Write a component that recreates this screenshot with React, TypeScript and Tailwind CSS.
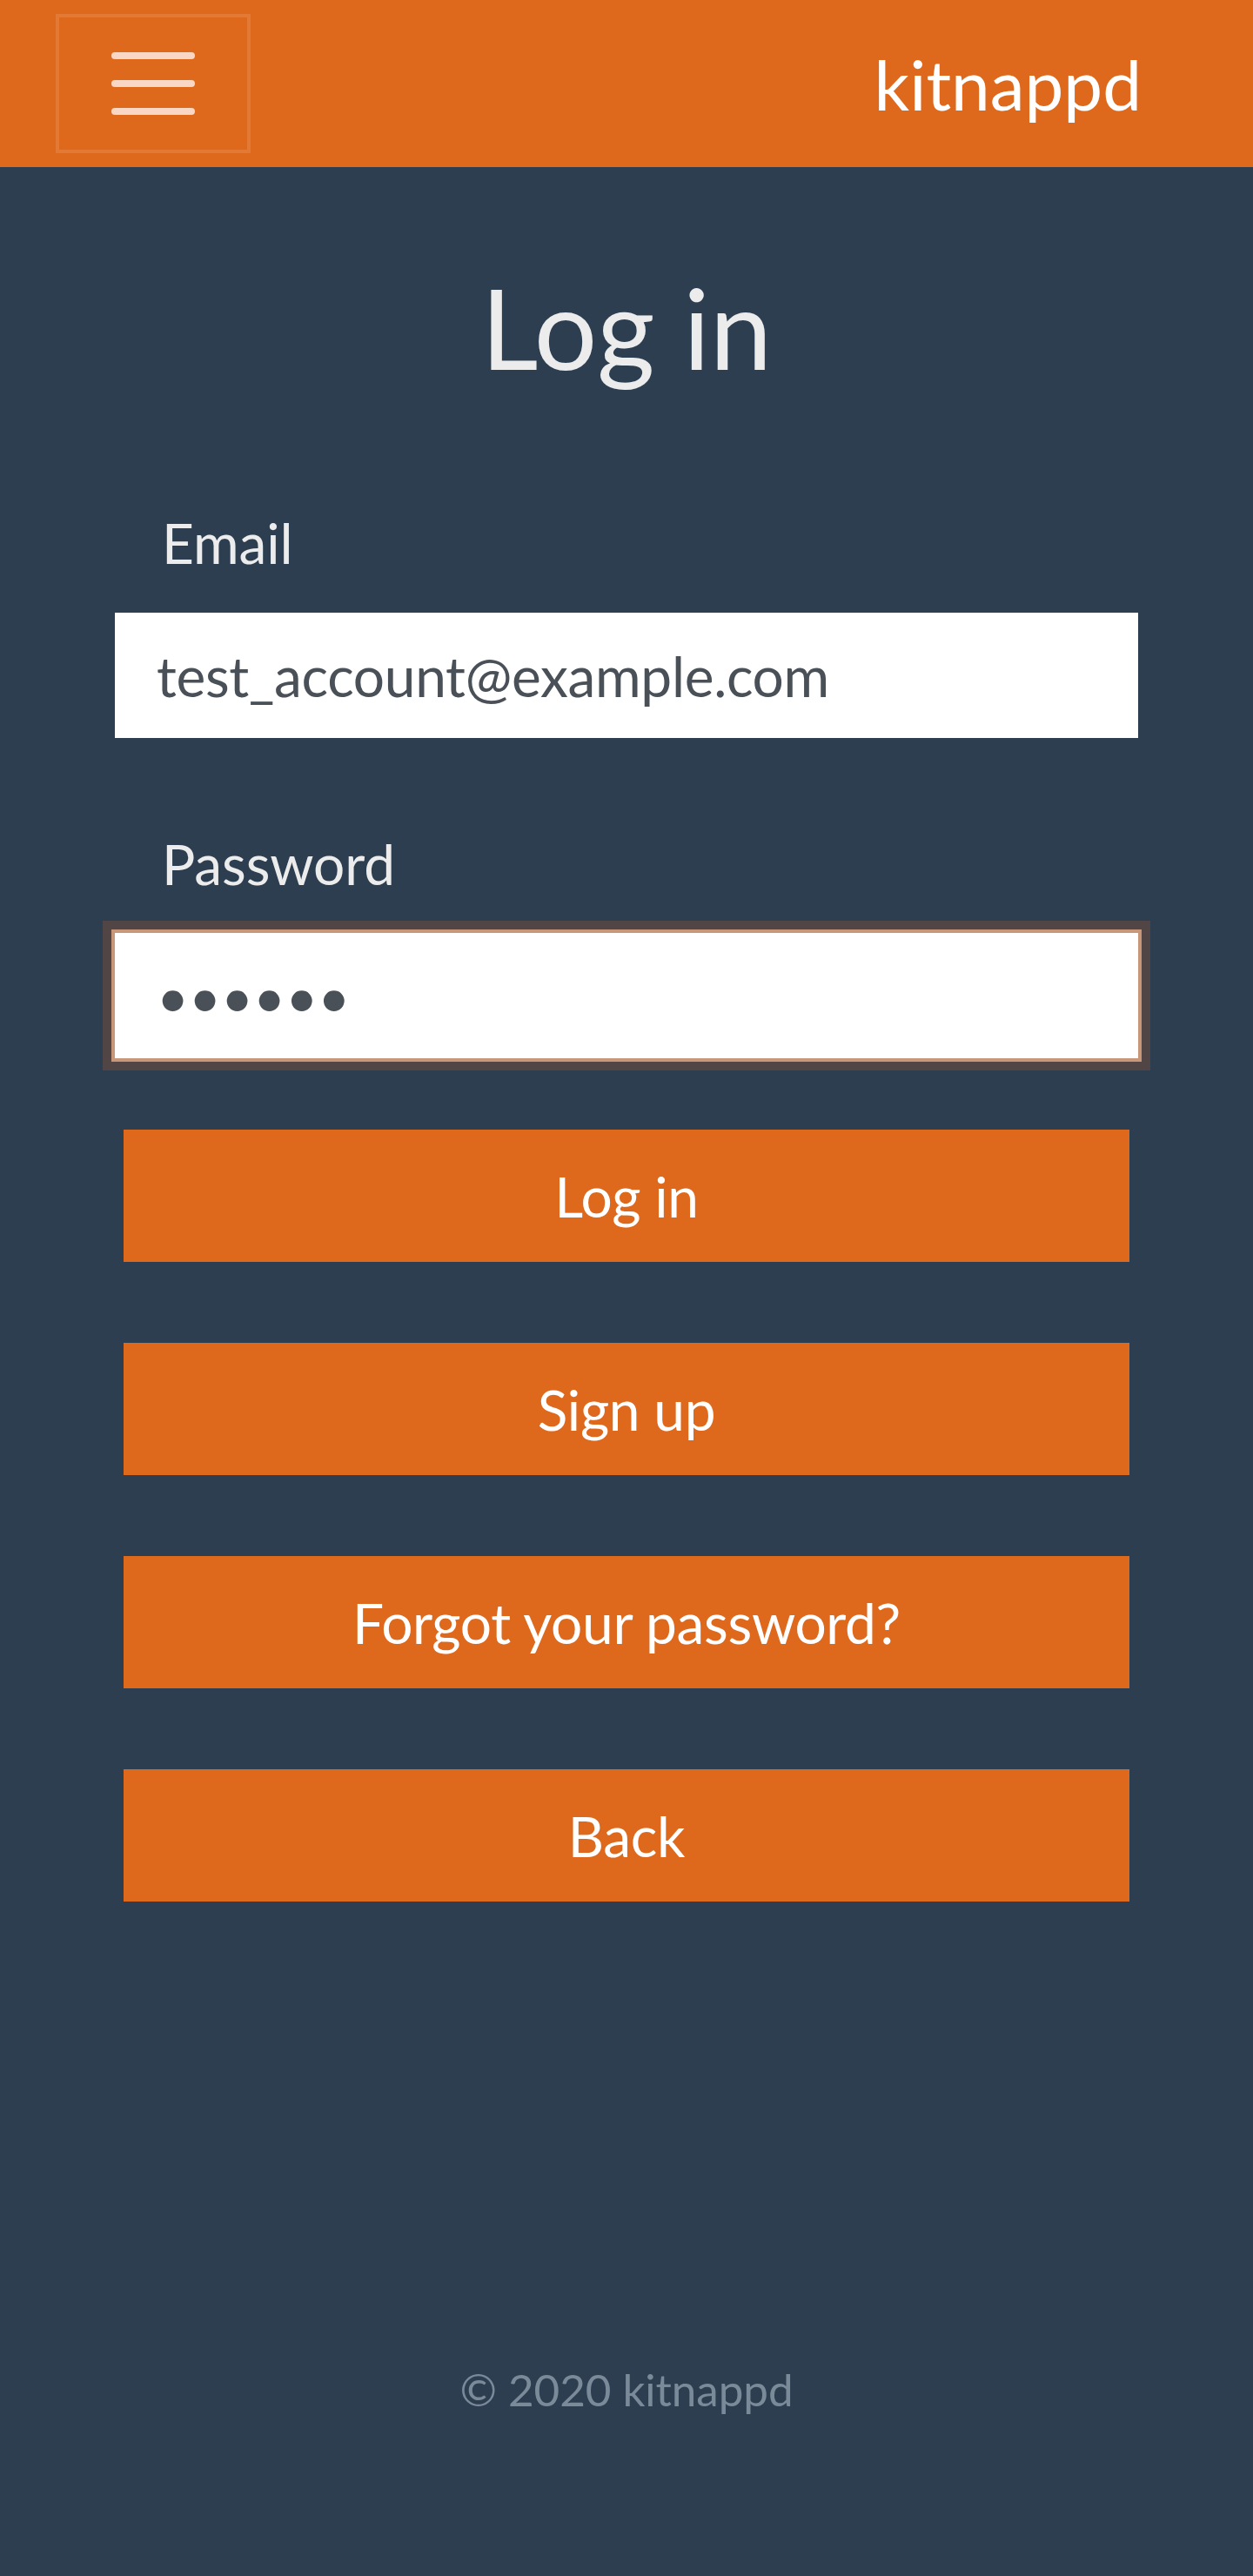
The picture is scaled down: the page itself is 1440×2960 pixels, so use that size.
import React from "react";

function Hamburger() {
  return (
    <svg width="120" height="120" viewBox="0 0 30 30" aria-hidden="true">
      <path
        d="M4 7h22M4 15h22M4 23h22"
        stroke="#f8d8c4"
        strokeWidth="2"
        strokeLinecap="round"
        fill="none"
      />
    </svg>
  );
}

export default function App() {
  const buttons = ["Log in", "Sign up", "Forgot your password?", "Back"];
  return (
    <div className="min-h-[2960px] bg-[#2c3e50] font-['Lato','Noto_Sans',sans-serif] tracking-[-0.005em] flex flex-col">
      <header className="h-[192px] bg-[#de691d] flex items-center justify-between pl-[64px] pr-[128px]">
        <button className="w-[224px] h-[160px] border-[4px] border-[#e27935] flex items-center justify-center">
          <Hamburger />
        </button>
        <span className="text-white text-[80px] leading-[96px] tracking-normal">kitnappd</span>
      </header>

      <main className="flex flex-col px-[128px]">
        <h1 className="mt-[107px] text-center text-[#ececec] text-[128px] leading-[154px] font-normal">
          Log in
        </h1>

        <label className="mt-[132px] pl-[58px] text-[#ececec] text-[64px] leading-[77px]">
          Email
        </label>
        <input
          type="email"
          readOnly
          defaultValue="test_account@example.com"
          className="mt-[38px] box-border h-[152px] w-full border-[4px] border-transparent bg-white bg-clip-padding px-[48px] text-[64px] tracking-[-0.005em] text-[#495057] outline-none"
        />

        <label className="mt-[102px] pl-[58px] text-[#ececec] text-[64px] leading-[77px]">
          Password
        </label>
        <input
          type="password"
          readOnly
          defaultValue="123456"
          className="mt-[37px] box-border h-[152px] w-full border-[4px] border-[#c8977a] bg-white px-[48px] text-[64px] text-[#495057] outline-none shadow-[0_0_0_10px_#514645]"
        />

        <div className="mt-[78px] px-[14px] flex flex-col gap-[93px]">
          {buttons.map((b) => (
            <button
              key={b}
              className="h-[152px] w-full bg-[#de691d] text-white text-[64px] leading-[77px] tracking-[-0.005em]"
            >
              {b}
            </button>
          ))}
        </div>
      </main>

      <footer className="mt-[530px] text-center text-[#7b8a99] text-[51.2px] leading-[61px]">
        © 2020 kitnappd
      </footer>
    </div>
  );
}
